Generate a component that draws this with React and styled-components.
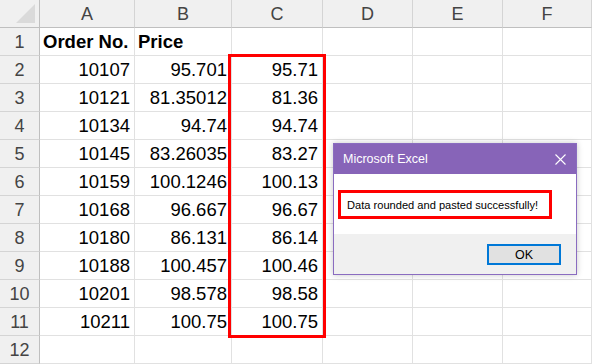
import React from "react";
import styled, { createGlobalStyle } from "styled-components";

const Global = createGlobalStyle`
  html, body { margin: 0; padding: 0; background: #ffffff; }
  body { width: 592px; height: 364px; overflow: hidden; }
`;

const Sheet = styled.div`
  position: relative;
  width: 592px;
  height: 364px;
  overflow: hidden;
  display: grid;
  grid-template-columns: 40px 95px 97px 91px 90px 90px 89px;
  grid-template-rows: repeat(13, 28px);
  font-family: "Liberation Sans", Arial, sans-serif;
  background: #ffffff;
`;

const Corner = styled.div`
  position: relative;
  background: #f0f0f0;
  border-right: 1px solid #bfbfbf;
  border-bottom: 1px solid #bfbfbf;
  box-sizing: border-box;
  &::after {
    content: "";
    position: absolute;
    right: 4px;
    bottom: 4px;
    width: 0;
    height: 0;
    border-left: 19px solid transparent;
    border-bottom: 19px solid #dadada;
  }
`;

const ColHead = styled.div`
  background: #f0f0f0;
  border-right: 1px solid #d4d4d4;
  border-bottom: 1px solid #bfbfbf;
  box-sizing: border-box;
  display: flex;
  align-items: center;
  justify-content: center;
  color: #444444;
  font-size: 18px;
  padding-top: 1px;
`;

const RowHead = styled.div`
  background: #f0f0f0;
  border-right: 1px solid #bfbfbf;
  border-bottom: 1px solid #d4d4d4;
  box-sizing: border-box;
  display: flex;
  align-items: center;
  justify-content: center;
  color: #444444;
  font-size: 18px;
  padding-top: 1px;
`;

const Cell = styled.div`
  border-right: 1px solid #e1e1e1;
  border-bottom: 1px solid #e1e1e1;
  box-sizing: border-box;
  display: flex;
  align-items: center;
  justify-content: ${(p) => (p.$bold ? "flex-start" : "flex-end")};
  padding: 1px ${(p) => (p.$bold ? "0" : "4px")} 0 ${(p) => (p.$bold ? "3px" : "0")};
  font-size: 18.5px;
  font-weight: ${(p) => (p.$bold ? 700 : 400)};
  color: #000000;
  white-space: nowrap;
  overflow: visible;
`;

const Highlight = styled.div`
  position: absolute;
  left: 228px;
  top: 54px;
  width: 98px;
  height: 284px;
  box-sizing: border-box;
  border: 3px solid #ff0000;
  pointer-events: none;
`;

const Dialog = styled.div`
  position: absolute;
  left: 333px;
  top: 143px;
  width: 244px;
  height: 132px;
  box-sizing: border-box;
  border: 1px solid #8a6cc0;
  background: #ffffff;
  box-shadow: 0 0 6px rgba(0, 0, 0, 0.22);
  display: flex;
  flex-direction: column;
  font-family: "Liberation Sans", Arial, sans-serif;
`;

const TitleBar = styled.div`
  height: 30px;
  background: #8764b8;
  color: #ffffff;
  display: flex;
  align-items: center;
  justify-content: space-between;
  padding: 0 10px 0 9px;
  font-size: 12.5px;
`;

const CloseIcon = styled.svg`
  width: 11px;
  height: 11px;
  display: block;
`;

const Body = styled.div`
  height: 60px;
  display: flex;
  align-items: center;
  padding-left: 4px;
  padding-top: 1px;
  box-sizing: border-box;
`;

const Message = styled.div`
  width: 214px;
  height: 29px;
  box-sizing: border-box;
  border: 3px solid #ff0000;
  display: flex;
  align-items: center;
  padding-left: 6px;
  font-size: 11.1px;
  color: #000000;
  white-space: nowrap;
`;

const Footer = styled.div`
  flex: 1;
  background: #f0f0f0;
  display: flex;
  align-items: flex-start;
  justify-content: flex-end;
  padding: 10px 15px 0 0;
`;

const OkButton = styled.button`
  width: 74px;
  height: 21px;
  box-sizing: border-box;
  border: 2px solid #0078d7;
  background: #e1e1e1;
  font-family: "Liberation Sans", Arial, sans-serif;
  font-size: 12.5px;
  color: #000000;
  padding: 0;
  display: flex;
  align-items: center;
  justify-content: center;
`;

const cols = ["A", "B", "C", "D", "E", "F"];
const data = [
  ["10107", "95.701", "95.71"],
  ["10121", "81.35012", "81.36"],
  ["10134", "94.74", "94.74"],
  ["10145", "83.26035", "83.27"],
  ["10159", "100.1246", "100.13"],
  ["10168", "96.667", "96.67"],
  ["10180", "86.131", "86.14"],
  ["10188", "100.457", "100.46"],
  ["10201", "98.578", "98.58"],
  ["10211", "100.75", "100.75"],
];

export default function App() {
  const rows = [];
  rows.push(
    <React.Fragment key="r1">
      <RowHead>1</RowHead>
      <Cell $bold>Order No.</Cell>
      <Cell $bold>Price</Cell>
      <Cell />
      <Cell />
      <Cell />
      <Cell />
    </React.Fragment>
  );
  data.forEach((r, i) => {
    rows.push(
      <React.Fragment key={"d" + i}>
        <RowHead>{i + 2}</RowHead>
        <Cell>{r[0]}</Cell>
        <Cell>{r[1]}</Cell>
        <Cell>{r[2]}</Cell>
        <Cell />
        <Cell />
        <Cell />
      </React.Fragment>
    );
  });
  rows.push(
    <React.Fragment key="r12">
      <RowHead>12</RowHead>
      <Cell />
      <Cell />
      <Cell />
      <Cell />
      <Cell />
      <Cell />
    </React.Fragment>
  );

  return (
    <>
      <Global />
      <Sheet>
        <Corner />
        {cols.map((c) => (
          <ColHead key={c}>{c}</ColHead>
        ))}
        {rows}
        <Highlight />
        <Dialog>
          <TitleBar>
            <span>Microsoft Excel</span>
            <CloseIcon viewBox="0 0 11 11">
              <path d="M0.5 0.5 L10.5 10.5 M10.5 0.5 L0.5 10.5" stroke="#ffffff" strokeWidth="1.1" fill="none" />
            </CloseIcon>
          </TitleBar>
          <Body>
            <Message>Data rounded and pasted successfully!</Message>
          </Body>
          <Footer>
            <OkButton>OK</OkButton>
          </Footer>
        </Dialog>
      </Sheet>
    </>
  );
}
